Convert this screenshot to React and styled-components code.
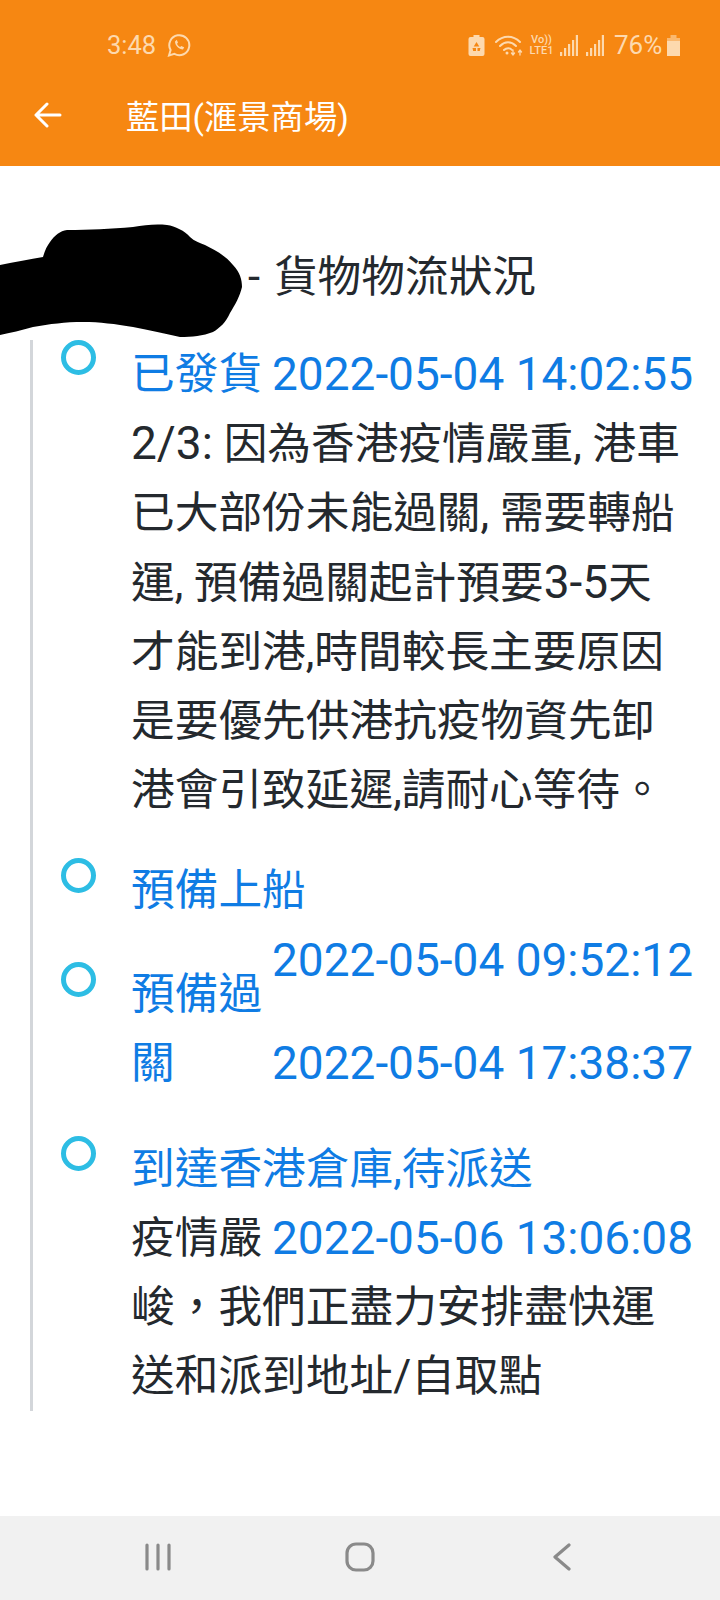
import React from "react";
import styled, { createGlobalStyle } from "styled-components";

const Global = createGlobalStyle`
  html, body { margin: 0; padding: 0; background: #fff; }
  body { font-family: Roboto, "Noto Sans CJK TC", sans-serif; }
`;
const Page = styled.div`
  position: relative; width: 720px; height: 1600px; display: flex; flex-direction: column; overflow: hidden; background: #fff;
`;
const Header = styled.header`
  height: 166px; background: #f68712; color: #fff; display: flex; flex-direction: column; flex: none;
`;
const StatusBar = styled.div`
  height: 90px; display: flex; align-items: center; justify-content: space-between;
  padding: 0 40px 0 107px; color: #fdd9ae; font-size: 25.5px; box-sizing: border-box;
`;
const StatusGroup = styled.div`display: flex; align-items: center; gap: 11px;`;
const StatusRight = styled.div`display: flex; align-items: center;`;
const StatusIcon = styled.svg`margin-left: ${p => p.$ml || 0}px; flex: none;`;
const Percent = styled.span`font-size: 26px; margin: 0 6px 0 10px; width: 47px; white-space: nowrap;`;
const Lte = styled.span`
  display: flex; flex-direction: column; align-items: center; margin-left: 6px; width: 25px; font-size: 11px; line-height: 11px; font-weight: 500;
`;
const AppBar = styled.div`
  height: 50px; display: flex; align-items: center; padding-left: 34px;
`;
const Title = styled.h1`
  margin: 6px 0 0 64px; font-size: 33.3px; line-height: 50px; font-weight: 400; color: #fff;
`;
const Main = styled.main`flex: 1; padding-top: 77px; min-height: 0;`;
const Heading = styled.div`
  height: 68px; padding-left: 248px; font-size: 43.7px; line-height: 68px; color: #24292e; margin-bottom: 29px; word-spacing: 3px;
`;
const Redaction = styled.svg`position: absolute; left: 0; top: 210px;`;
const Timeline = styled.ul`
  list-style: none; margin: 0 0 0 30px; padding: 0; border-left: 3px solid #d3d6da; width: 690px; box-sizing: border-box;
`;
const Item = styled.li`
  position: relative; padding: 0 24px 0 98px; margin-bottom: ${p => p.$gap}px; font-size: 43.7px; line-height: 69px;
`;
const Dot = styled.span`
  position: absolute; left: 28px; top: ${p => p.$top || 0}px; width: 35px; height: 35px; box-sizing: border-box; border: 5px solid #2dbde4; border-radius: 50%;
`;
const Row = styled.div`display: flex;`;
const Name = styled.span`color: ${p => (p.$plain ? "#24292e" : "#0f7ce4")}; width: 141px; flex: none;`;
const WideName = styled.div`color: #0f7ce4;`;
const Dates = styled.div`
  display: flex; flex-direction: column; gap: ${p => (p.$raised ? 34 : 0)}px; margin-top: ${p => (p.$raised ? -34 : 0)}px;
  color: #0f7ce4; font-size: 46px; white-space: nowrap;
`;
const BodyLine = styled.div`color: #24292e; white-space: nowrap;`;
const Latin = styled.span`font-size: 46px;`;
const NavBar = styled.nav`
  height: 84px; flex: none; background: #f1f1f1; display: flex; align-items: center; padding: 0 0 3px 144px; box-sizing: border-box;
`;
const NavHome = styled.svg`margin: 0 178px 0 173px;`;

const Signal = ({ ml }) => (
  <StatusIcon $ml={ml} width="18" height="21" viewBox="0 0 18 21" fill="#fdd9ae">
    <rect x="0" y="17" width="2.200" height="4" />
    <rect x="4" y="13" width="2.200" height="8" />
    <rect x="8" y="9" width="2.200" height="12" />
    <rect x="12" y="5" width="2.200" height="16" />
    <rect x="15.800" y="0" width="2.200" height="21" />
  </StatusIcon>
);

const notice = [
  <><Latin>2/3:</Latin> 因為香港疫情嚴重, 港車</>,
  "已大部份未能過關, 需要轉船",
  <>運, 預備過關起計預要<Latin>3-5</Latin>天</>,
  "才能到港,時間較長主要原因",
  "是要優先供港抗疫物資先卸",
  "港會引致延遲,請耐心等待。",
];

export default function App() {
  return (
    <Page>
      <Global />
      <Header>
        <StatusBar>
          <StatusGroup>
            <span>3:48</span>
            <svg width="24" height="25" viewBox="0 0 24 24" fill="none" stroke="#fdd9ae" strokeWidth="2">
              <path d="M2 22l1.600-5.400A10 10 0 1 1 7.400 20.400z" />
              <path d="M8 8c0 4 4 8 8 8l1.200-2.200-3-1.300-1 1c-1.500-.6-2.600-1.700-3.200-3.200l1-1-1.200-3z" fill="#fdd9ae" stroke="none" />
            </svg>
          </StatusGroup>
          <StatusRight>
            <StatusIcon width="17" height="21" viewBox="0 0 17 21" fill="#fdd9ae">
              <path d="M5.500 0h6v2h3a2 2 0 0 1 2 2v15a2 2 0 0 1-2 2h-12a2 2 0 0 1-2-2V4a2 2 0 0 1 2-2h3z" />
              <path d="M8.500 7l2.800 4.500H5.700zM4.500 13h3.500v3H5.200zM9.500 13h3l-.8 3H9.500z" fill="#f68712" />
            </StatusIcon>
            <StatusIcon $ml={10} width="28" height="21" viewBox="0 0 28 21" fill="none" stroke="#fdd9ae" strokeWidth="2" strokeLinecap="round">
              <path d="M1 7c7-7 17-7 24 0M5 11c5-5 11-5 16 0M9 15c2.500-2.500 6-2.500 8 0" />
              <circle cx="12" cy="18" r="1.500" fill="#fdd9ae" stroke="none" />
              <path d="M18 15v5M16.500 18l1.500 2 1.500-2M25 20v-5M23.500 17l1.500-2 1.500 2" strokeWidth="1.300" />
            </StatusIcon>
            <Lte><span>Vo))</span><span>LTE1</span></Lte>
            <Signal ml={6} />
            <Signal ml={8} />
            <Percent>76%</Percent>
            <StatusIcon width="13" height="21" viewBox="0 0 13 21" fill="#fdd9ae">
              <rect x="3.500" y="0" width="6" height="3" opacity="0.6" />
              <rect x="0" y="3" width="13" height="3" opacity="0.6" />
              <rect x="0" y="6" width="13" height="15" />
            </StatusIcon>
          </StatusRight>
        </StatusBar>
        <AppBar>
          <svg width="28" height="26" viewBox="0 0 28 26" fill="none" stroke="#fff" strokeWidth="3" strokeLinecap="round" strokeLinejoin="round">
            <path d="M2 13h24M13 2L2 13l11 11" />
          </svg>
          <Title>藍田(滙景商場)</Title>
        </AppBar>
      </Header>
      <Redaction width="243" height="130" viewBox="0 0 243 130">
        <path d="M0 55 C15 52 30 49 43 47 C45 40 47 36 50 32 C55 25 60 21 67 20 C90 20 110 19 133 17 C145 15 155 14 167 15 C175 16 185 21 190 27 C194 31 200 33 205 35 C215 40 226 46 233 55 C240 62 242 70 242 77 C240 86 235 95 230 103 C226 112 220 118 213 122 C203 126 192 127 180 127 C165 124 150 120 133 117 C115 114 100 112 83 112 C65 112 50 114 33 117 C22 120 10 123 0 125 Z" fill="#000" />
      </Redaction>
      <Main>
        <Heading>- 貨物物流狀況</Heading>
        <Timeline>
          <Item $gap={31}>
            <Dot />
            <Row><Name>已發貨</Name><Dates><span>2022-05-04 14:02:55</span></Dates></Row>
            {notice.map((line, i) => <BodyLine key={i}>{line}</BodyLine>)}
          </Item>
          <Item $gap={35}>
            <Dot $top={2} />
            <WideName>預備上船</WideName>
          </Item>
          <Item $gap={37}>
            <Dot $top={2} />
            <Row>
              <Name>預備過關</Name>
              <Dates $raised><span>2022-05-04 09:52:12</span><span>2022-05-04 17:38:37</span></Dates>
            </Row>
          </Item>
          <Item $gap={3}>
            <Dot $top={1} />
            <WideName>到達香港倉庫,待派送</WideName>
            <Row><Name $plain>疫情嚴</Name><Dates><span>2022-05-06 13:06:08</span></Dates></Row>
            <BodyLine>峻，我們正盡力安排盡快運</BodyLine>
            <BodyLine>送和派到地址/自取點</BodyLine>
          </Item>
        </Timeline>
      </Main>
      <NavBar>
        <svg width="28" height="28" viewBox="0 0 28 28" stroke="#8a8a8a" strokeWidth="3.200" strokeLinecap="round">
          <path d="M3 2v24M14 2v24M25 2v24" />
        </svg>
        <NavHome width="30" height="30" viewBox="0 0 30 30" fill="none" stroke="#8a8a8a" strokeWidth="3.200">
          <rect x="2" y="2" width="26" height="26" rx="9" />
        </NavHome>
        <svg width="18" height="28" viewBox="0 0 18 28" fill="none" stroke="#8a8a8a" strokeWidth="3.200" strokeLinecap="round" strokeLinejoin="round">
          <path d="M16 2L2 14l14 12" />
        </svg>
      </NavBar>
    </Page>
  );
}
